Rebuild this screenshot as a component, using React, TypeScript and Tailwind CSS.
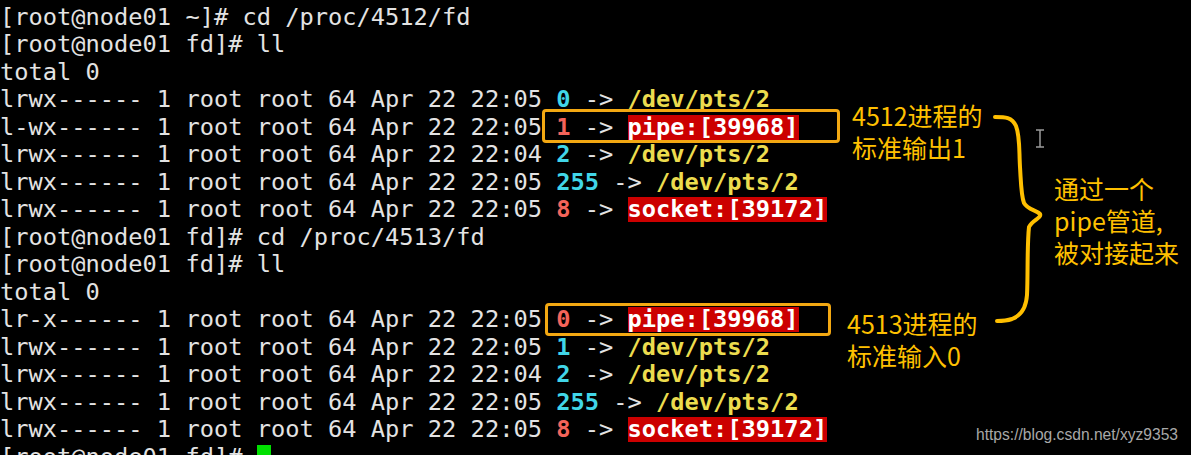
import React from 'react';

type Seg = { t: string; c?: 'cyan' | 'red' | 'path' | 'hl' };

const perm = (p: string, d: string) => `${p} 1 root root 64 Apr 22 ${d} `;

const lines: Seg[][] = [
  [{ t: '[root@node01 ~]# cd /proc/4512/fd' }],
  [{ t: '[root@node01 fd]# ll' }],
  [{ t: 'total 0' }],
  [{ t: perm('lrwx------', '22:05') }, { t: '0', c: 'cyan' }, { t: ' -> ' }, { t: '/dev/pts/2', c: 'path' }],
  [{ t: perm('l-wx------', '22:05') }, { t: '1', c: 'red' }, { t: ' -> ' }, { t: 'pipe:[39968]', c: 'hl' }],
  [{ t: perm('lrwx------', '22:04') }, { t: '2', c: 'cyan' }, { t: ' -> ' }, { t: '/dev/pts/2', c: 'path' }],
  [{ t: perm('lrwx------', '22:05') }, { t: '255', c: 'cyan' }, { t: ' -> ' }, { t: '/dev/pts/2', c: 'path' }],
  [{ t: perm('lrwx------', '22:05') }, { t: '8', c: 'red' }, { t: ' -> ' }, { t: 'socket:[39172]', c: 'hl' }],
  [{ t: '[root@node01 fd]# cd /proc/4513/fd' }],
  [{ t: '[root@node01 fd]# ll' }],
  [{ t: 'total 0' }],
  [{ t: perm('lr-x------', '22:05') }, { t: '0', c: 'red' }, { t: ' -> ' }, { t: 'pipe:[39968]', c: 'hl' }],
  [{ t: perm('lrwx------', '22:05') }, { t: '1', c: 'cyan' }, { t: ' -> ' }, { t: '/dev/pts/2', c: 'path' }],
  [{ t: perm('lrwx------', '22:04') }, { t: '2', c: 'cyan' }, { t: ' -> ' }, { t: '/dev/pts/2', c: 'path' }],
  [{ t: perm('lrwx------', '22:05') }, { t: '255', c: 'cyan' }, { t: ' -> ' }, { t: '/dev/pts/2', c: 'path' }],
  [{ t: perm('lrwx------', '22:05') }, { t: '8', c: 'red' }, { t: ' -> ' }, { t: 'socket:[39172]', c: 'hl' }],
];

function Segment({ seg }: { seg: Seg }) {
  if (seg.c === 'cyan') return <span className="font-bold text-[#41d6e8]">{seg.t}</span>;
  if (seg.c === 'red') return <span className="font-bold text-[#f4645a]">{seg.t}</span>;
  if (seg.c === 'path') return <span className="font-bold text-[#ecdc4e]">{seg.t}</span>;
  if (seg.c === 'hl')
    return <span className="inline-block bg-[#cc0000] font-bold leading-[25px] text-white">{seg.t}</span>;
  return <span>{seg.t}</span>;
}

const note = 'absolute text-[25px] leading-[32px] text-[#ffc000] whitespace-nowrap';

export default function App() {
  return (
    <div className="relative h-[455px] w-[1191px] overflow-hidden bg-black">
      {/* terminal */}
      <div className="whitespace-pre pt-[3.75px] font-['DejaVu_Sans_Mono',monospace] text-[23.7px] leading-[27.5px] text-[#e3e3e3]">
        {lines.map((line, i) => (
          <div key={i} className="h-[27.5px]">
            {line.map((seg, j) => (
              <Segment key={j} seg={seg} />
            ))}
          </div>
        ))}
        <div className="flex h-[27.5px]">
          <span>[root@node01 fd]# </span>
          <span className="mt-[1px] h-[26px] w-[14px] bg-[#00e000]" />
        </div>
      </div>

      {/* annotations */}
      <div className="absolute left-[542px] top-[109px] h-[34px] w-[298px] rounded-[4px] border-[3px] border-[#f3a812]" />
      <div className="absolute left-[545px] top-[303px] h-[33px] w-[286px] rounded-[4px] border-[3px] border-[#f3a812]" />

      <div className={`${note} left-[852px] top-[99px] font-['Noto_Sans_CJK_SC',sans-serif]`}>
        <div>4512进程的</div>
        <div>标准输出1</div>
      </div>
      <div className={`${note} left-[847px] top-[307px] font-['Noto_Sans_CJK_SC',sans-serif]`}>
        <div>4513进程的</div>
        <div>标准输入0</div>
      </div>
      <div className={`${note} left-[1054px] top-[172px] font-['Noto_Sans_CJK_SC',sans-serif]`}>
        <div>通过一个</div>
        <div>pipe管道,</div>
        <div>被对接起来</div>
      </div>

      <svg className="absolute left-0 top-0" width="1191" height="455" viewBox="0 0 1191 455" fill="none">
        <path
          d="M995 117 C1005 117 1012 117 1016 126 C1020 136 1019 150 1020 167 C1021 182 1021 195 1024 203 C1028 210 1036 210 1040 214 C1042 218 1032 220 1029 227 C1027 245 1028 275 1027 295 C1026 310 1020 316 1012 319 C1006 321 1000 321 997 321"
          stroke="#ffbf00"
          strokeWidth="4"
          strokeLinecap="round"
          strokeLinejoin="round"
        />
        <path d="M1036 130 H1044 M1040 130 V147 M1036 147 H1044" stroke="#9a9a9a" strokeWidth="1.5" />
      </svg>

      <div className="absolute left-[976px] top-[425px] font-['Liberation_Sans',Arial,sans-serif] text-[15.6px] leading-[20px] text-[#a8a8a8]">
        https://blog.csdn.net/xyz9353
      </div>
    </div>
  );
}
